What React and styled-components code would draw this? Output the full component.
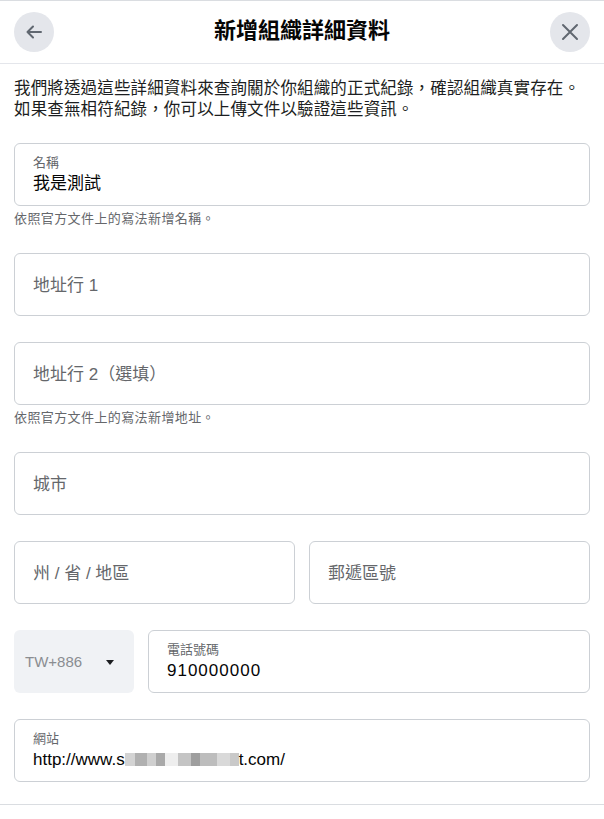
import React from "react"
import styled, { createGlobalStyle } from "styled-components"

const GlobalStyle = createGlobalStyle`
    html, body {
        margin: 0;
        padding: 0;
        background: #fff;
        font-family: "Liberation Sans", "Noto Sans CJK TC", sans-serif;
        color: #050505;
    }
`

const Page = styled.div`
    width: 604px;
    height: 819px;
    border-top: 1px solid #dadde1;
    box-sizing: border-box;
    overflow: hidden;
`

const Header = styled.header`
    height: 62px;
    padding: 0 14px;
    display: flex;
    align-items: center;
    justify-content: space-between;
    border-bottom: 1px solid #e4e6eb;
`

const RoundButton = styled.button`
    width: 40px;
    height: 40px;
    border-radius: 50%;
    border: none;
    padding: 0;
    background: #e4e6eb;
    display: flex;
    align-items: center;
    justify-content: center;
    color: #606770;
`

const Title = styled.h1`
    margin: 0 0 2px;
    font-size: 22px;
    line-height: 28px;
    font-weight: 700;
`

const Body = styled.main`
    padding: 14px 14px 0;
`

const Intro = styled.p`
    margin: 0 0 23px;
    font-size: 16.5px;
    line-height: 21px;
    letter-spacing: 0.15px;
    color: #1c1e21;
`

const Group = styled.div`
    margin-bottom: 26px;
`

const Row = styled.div`
    display: flex;
    gap: 14px;
    margin-bottom: 26px;
`

const Field = styled.div`
    flex: 1;
    height: 63px;
    box-sizing: border-box;
    border: 1px solid #ccd0d5;
    border-radius: 6px;
    padding: 0 18px;
    display: flex;
    flex-direction: column;
    justify-content: center;
    gap: 2px;
`

const Label = styled.div`
    font-size: 13px;
    line-height: 17px;
    color: #65676b;
`

const Value = styled.div`
    font-size: 17px;
    line-height: 22px;
    letter-spacing: ${p => p.$spacing || 0}px;
    color: #050505;
`

const Placeholder = styled.div`
    font-size: 17px;
    line-height: 22px;
    margin-top: 2px;
    color: #65676b;
`

const Helper = styled.div`
    margin-top: 5px;
    font-size: 13px;
    line-height: 16px;
    letter-spacing: 0.4px;
    color: #65676b;
`

const Country = styled.div`
    width: 120px;
    height: 63px;
    flex: none;
    box-sizing: border-box;
    border-radius: 6px;
    background: #f0f2f5;
    padding: 0 11px;
    display: flex;
    align-items: center;
    gap: 24px;
    font-size: 15px;
    color: #8a8d91;
`

const Caret = styled.span`
    width: 0;
    height: 0;
    border-left: 4px solid transparent;
    border-right: 4px solid transparent;
    border-top: 5px solid #1c1e21;
    margin-top: 2px;
`

const Blur = styled.span`
    display: inline-block;
    width: 114px;
    height: 13px;
    vertical-align: -1px;
    background: linear-gradient(90deg,
        #d3d3d3 0 10px, #b0b0b0 10px 22px, #cfcfcf 22px 31px, #a9a9a9 31px 40px,
        #eeeeee 40px 53px, #c4c4c4 53px 66px, #9e9e9e 66px 75px, #bdbdbd 75px 92px,
        #d9d9d9 92px 105px, #c9c9c9 105px 114px);
`

const Divider = styled.div`
    margin: 22px -14px 0;
    border-top: 1px solid #dadde1;
`

const BackIcon = () => (
    <svg width="20" height="20" viewBox="0 0 20 20" fill="none" stroke="currentColor" strokeWidth="2" strokeLinecap="round" strokeLinejoin="round">
        <path d="M17 10H3.5M9 4.5L3.5 10L9 15.5" />
    </svg>
)

const CloseIcon = () => (
    <svg width="20" height="20" viewBox="0 0 20 20" fill="none" stroke="currentColor" strokeWidth="2" strokeLinecap="round">
        <path d="M3 3L17 17M17 3L3 17" />
    </svg>
)

export default function App() {
    return (
        <Page>
            <GlobalStyle />
            <Header>
                <RoundButton aria-label="返回"><BackIcon /></RoundButton>
                <Title>新增組織詳細資料</Title>
                <RoundButton aria-label="關閉"><CloseIcon /></RoundButton>
            </Header>
            <Body>
                <Intro>
                    我們將透過這些詳細資料來查詢關於你組織的正式紀錄，確認組織真實存在。<br />
                    如果查無相符紀錄，你可以上傳文件以驗證這些資訊。
                </Intro>

                <Group>
                    <Field>
                        <Label>名稱</Label>
                        <Value>我是測試</Value>
                    </Field>
                    <Helper>依照官方文件上的寫法新增名稱。</Helper>
                </Group>

                <Group>
                    <Field><Placeholder>地址行 1</Placeholder></Field>
                </Group>

                <Group>
                    <Field><Placeholder>地址行 2（選填）</Placeholder></Field>
                    <Helper>依照官方文件上的寫法新增地址。</Helper>
                </Group>

                <Group>
                    <Field><Placeholder>城市</Placeholder></Field>
                </Group>

                <Row>
                    <Field><Placeholder>州 / 省 / 地區</Placeholder></Field>
                    <Field><Placeholder>郵遞區號</Placeholder></Field>
                </Row>

                <Row>
                    <Country>TW+886 <Caret /></Country>
                    <Field>
                        <Label>電話號碼</Label>
                        <Value $spacing={1}>910000000</Value>
                    </Field>
                </Row>

                <Field>
                    <Label>網站</Label>
                    <Value>http://www.s<Blur />t.com/</Value>
                </Field>

                <Divider />
            </Body>
        </Page>
    )
}
